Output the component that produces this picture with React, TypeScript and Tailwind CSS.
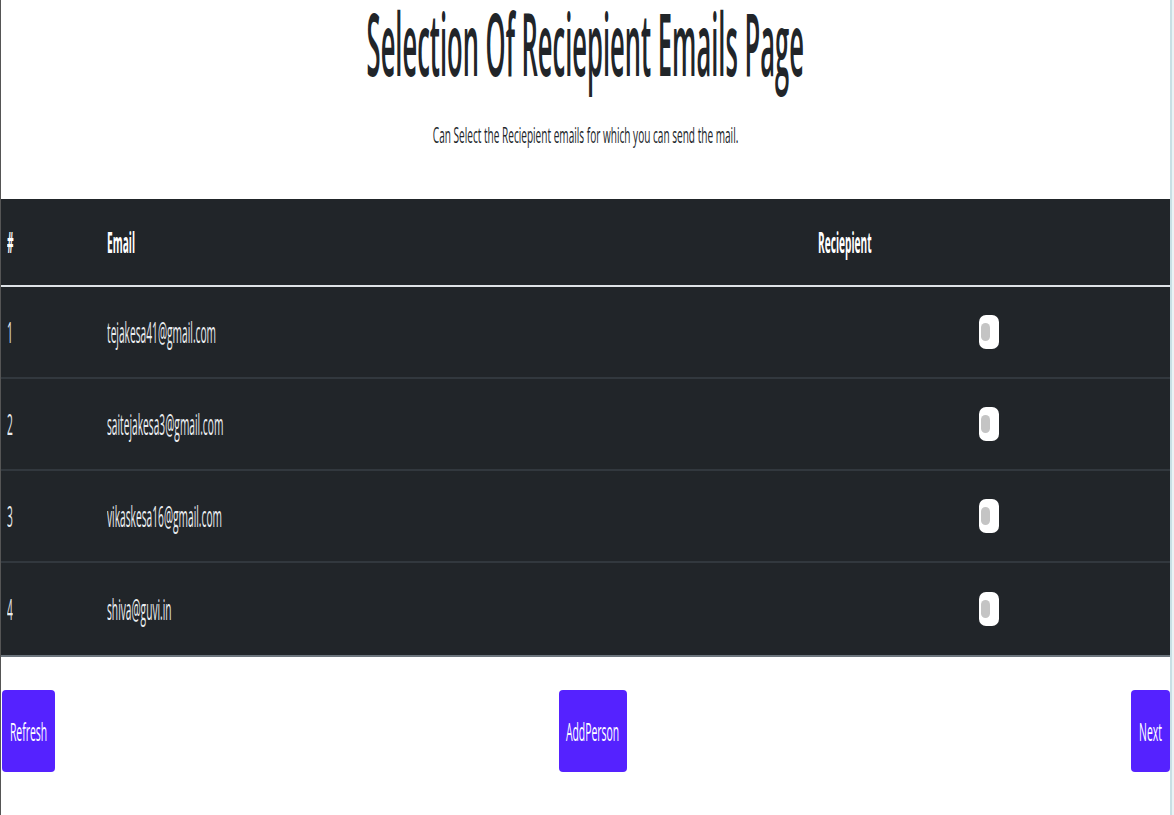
import React from "react";

const emails = [
  "tejakesa41@gmail.com",
  "saitejakesa3@gmail.com",
  "vikaskesa16@gmail.com",
  "shiva@guvi.in",
];

function Switch() {
  return (
    <div className="w-[20px] h-[34px] bg-white rounded-[7px] flex items-center pl-[2px]">
      <div className="w-[9px] h-[18px] rounded-full bg-[#c4c4c4]" />
    </div>
  );
}

const buttons = [
  { label: "Refresh", w: "w-[53px]" },
  { label: "AddPerson", w: "w-[68px]" },
  { label: "Next", w: "w-[39px]" },
];

export default function App() {
  return (
    <div
      className="w-[1174px] h-[815px] bg-white flex border-l border-l-[#555] overflow-hidden"
      style={{ fontFamily: '"Open Sans", "Noto Sans", sans-serif' }}
    >
      <div className="w-[1169px] flex flex-col">
        <div className="h-[199px] flex flex-col items-center">
          <div className="h-[86px] flex justify-center">
            <span className="inline-block whitespace-nowrap text-[86px] leading-none font-semibold text-[#212529] scale-x-[0.297] origin-center">
              Selection Of Reciepient Emails Page
            </span>
          </div>
          <div className="mt-[37px] flex justify-center">
            <span className="inline-block whitespace-nowrap text-[22px] leading-none text-[#212529] scale-x-[0.458] origin-center">
              Can Select the Reciepient emails for which you can send the mail.
            </span>
          </div>
        </div>

        <div className="bg-[#212529] text-white">
          <div className="h-[88px] flex items-center border-b-2 border-b-[#dee2e6] font-bold text-[29px]">
            <div className="w-[106px] pl-[6px]">
              <span className="inline-block whitespace-nowrap scale-x-[0.35] origin-left">#</span>
            </div>
            <div className="w-[711px]">
              <span className="inline-block whitespace-nowrap scale-x-[0.35] origin-left">Email</span>
            </div>
            <div className="flex-1">
              <span className="inline-block whitespace-nowrap scale-x-[0.35] origin-left">Reciepient</span>
            </div>
          </div>
          {emails.map((e, i) => (
            <div
              key={e}
              className={
                "h-[92px] flex items-center text-[29px] text-[#e9ecef] " +
                (i < emails.length - 1 ? "border-b-2 border-b-[#32383e]" : "")
              }
            >
              <div className="w-[106px] pl-[6px]">
                <span className="inline-block whitespace-nowrap scale-x-[0.352] origin-left">{i + 1}</span>
              </div>
              <div className="w-[872px]">
                <span className="inline-block whitespace-nowrap scale-x-[0.352] origin-left">{e}</span>
              </div>
              <div className="flex-1">
                <Switch />
              </div>
            </div>
          ))}
        </div>
        <div className="h-[2px] bg-[#6c757d]" />

        <div className="flex justify-between items-start pt-[33px] pl-[1px]">
          {buttons.map((b) => (
            <div
              key={b.label}
              className={
                "h-[82px] bg-[#5522ff] rounded-[4px] flex items-center justify-center text-white text-[26px] " +
                b.w
              }
            >
              <span className="inline-block whitespace-nowrap scale-x-[0.4] origin-center shrink-0">
                {b.label}
              </span>
            </div>
          ))}
        </div>
      </div>
      <div className="flex-1 border-l-2 border-l-[#c9dfe4] bg-[#eaf3f5]" />
    </div>
  );
}
